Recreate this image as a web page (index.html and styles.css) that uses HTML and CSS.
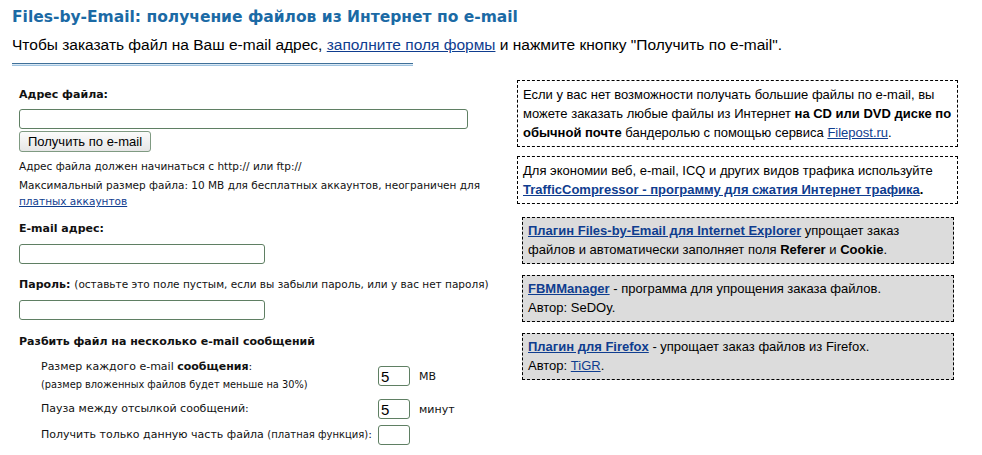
FILE: index.html
```
<!doctype html>
<html lang="ru">
<head>
    <meta charset="utf-8">
    <title>Files-by-Email</title>
    <link rel="stylesheet" href="styles.css">
</head>
<body>
    <h1 class="Title">Files-by-Email: получение файлов из Интернет по e-mail</h1>
    <p class="Lead">Чтобы заказать файл на Ваш e-mail адрес, <a href="#form">заполните поля формы</a> и нажмите кнопку "Получить по e-mail".</p>
    <div class="Rule"></div>

    <div class="Columns">
        <form id="form" class="Order">
            <label class="Label" for="url_el">Адрес файла:</label>
            <input id="url_el" class="Input _Wide" type="text" name="url">
            <button class="Button" type="submit">Получить по e-mail</button>
            <p class="Note">Адрес файла должен начинаться с http:// или ftp://</p>
            <p class="Note _Second">Максимальный размер файла: 10 MB для бесплатных аккаунтов, неограничен для <a href="#">платных аккаунтов</a></p>

            <label class="Label _Gap" for="email_el">E-mail адрес:</label>
            <input id="email_el" class="Input _Mid" type="text" name="email">

            <label class="Label _Gap" for="pass_el">Пароль: <span class="Hint">(оставьте это поле пустым, если вы забыли пароль, или у вас нет пароля)</span></label>
            <input id="pass_el" class="Input _Mid" type="password" name="password">

            <div class="Label _Gap _Split">Разбить файл на несколько e-mail сообщений</div>
            <div class="Split">
                <div class="Split-name">
                    Размер каждого e-mail <b>сообщения</b>:
                    <small>(размер вложенных файлов будет меньше на 30%)</small>
                </div>
                <input class="Input _Tiny" type="text" value="5">
                <span class="Split-unit">MB</span>

                <div class="Split-name">Пауза между отсылкой сообщений:</div>
                <input class="Input _Tiny" type="text" value="5">
                <span class="Split-unit">минут</span>

                <div class="Split-name">Получить только данную часть файла <span class="Hint _Small">(платная функция)</span>:</div>
                <input class="Input _Tiny" type="text">
                <span></span>
            </div>
        </form>

        <div class="Side">
            <div class="Box">
                Если у вас нет возможности получать большие файлы по e-mail, вы можете заказать любые файлы из Интернет <b>на CD или DVD диске по обычной почте</b> бандеролью с помощью сервиса <a href="#">Filepost.ru</a>.
            </div>
            <div class="Box">
                Для экономии веб, e-mail, ICQ и других видов трафика используйте <b><a href="#">TrafficCompressor - программу для сжатия Интернет трафика</a>.</b>
            </div>
            <div class="Box _Grey _First">
                <b><a href="#">Плагин Files-by-Email для Internet Explorer</a></b> упрощает заказ файлов и автоматически заполняет поля <b>Referer</b> и <b>Cookie</b>.
            </div>
            <div class="Box _Grey">
                <b><a href="#">FBMManager</a></b> - программа для упрощения заказа файлов.<br>
                Автор: SeDOy.
            </div>
            <div class="Box _Grey">
                <b><a href="#">Плагин для Firefox</a></b> - упрощает заказ файлов из Firefox.<br>
                Автор: <a href="#">TiGR</a>.
            </div>
        </div>
    </div>
</body>
</html>
```

FILE: styles.css
```
body {
    margin: 0;
    padding: 0 12px;
    font-family: 'Liberation Sans', Arial, sans-serif;
    color: #000;
    background: #fff;
}
a {
    color: #0f3d8f;
}
.Title {
    margin: 7px 0 0;
    font-family: 'DejaVu Sans', Verdana, sans-serif;
    font-size: 15.5px;
    line-height: 20px;
    font-weight: bold;
    color: #1b6aa5;
}
.Lead {
    margin: 8px 0 0;
    font-size: 15.5px;
    line-height: 20px;
}
.Rule {
    width: 401px;
    height: 1px;
    margin-top: 8px;
    border-top: 1px solid #3f7099;
    border-bottom: 1px solid #9fc3e0;
    background: #dbe9f4;
}
.Columns {
    display: flex;
    margin-top: 14px;
}

/* form column */
.Order {
    width: 498px;
    padding: 8px 0 0 7px;
    font-family: 'DejaVu Sans', Verdana, sans-serif;
    font-size: 11px;
    color: #111;
}
.Label {
    display: block;
    font-weight: bold;
    line-height: 14px;
}
.Label._Gap {
    margin-top: 13px;
}
.Label._Split {
    margin-top: 15px;
}
.Hint {
    font-weight: normal;
    font-size: 10.5px;
}
.Hint._Small {
    font-size: 10px;
}
.Input {
    display: block;
    box-sizing: border-box;
    height: 20px;
    margin-top: 7px;
    padding: 0 2px;
    border: 1px solid #5f7f63;
    border-radius: 3px;
    font-family: 'Liberation Sans', Arial, sans-serif;
    font-size: 15px;
    background: #fff;
}
.Input._Wide {
    width: 449px;
}
.Input._Mid {
    width: 246px;
    margin-top: 8px;
}
.Input._Tiny {
    width: 32px;
    margin: 0;
}
.Button {
    display: block;
    height: 21px;
    margin-top: 2px;
    padding: 0 8px;
    border: 1px solid #7f9a82;
    border-radius: 3px;
    background: linear-gradient(#fbfbfb, #e6e6e6);
    font-family: 'Liberation Sans', Arial, sans-serif;
    font-size: 13px;
    color: #000;
}
.Note {
    margin: 6px 0 0;
    font-size: 10.5px;
    line-height: 16px;
}
.Note._Second {
    margin-top: 3px;
}
.Split {
    display: grid;
    grid-template-columns: 337px 36px auto;
    align-items: center;
    row-gap: 6px;
    margin: 10px 0 0 22px;
}
.Split-name {
    line-height: 16px;
}
.Split-name small {
    display: block;
    margin-top: 2px;
    font-size: 9.8px;
}
.Split-unit {
    padding-left: 5px;
}

/* side column */
.Side {
    width: 441px;
}
.Box {
    margin-bottom: 9px;
    padding: 4px 5px;
    border: 1px dashed #000;
    font-size: 13px;
    line-height: 19px;
}
.Box._Grey {
    margin: 0 4px 11px 5px;
    padding: 3px 5px 4px;
    background: #dcdcdc;
}
.Box._Grey._First {
    margin-top: 13px;
}
```
